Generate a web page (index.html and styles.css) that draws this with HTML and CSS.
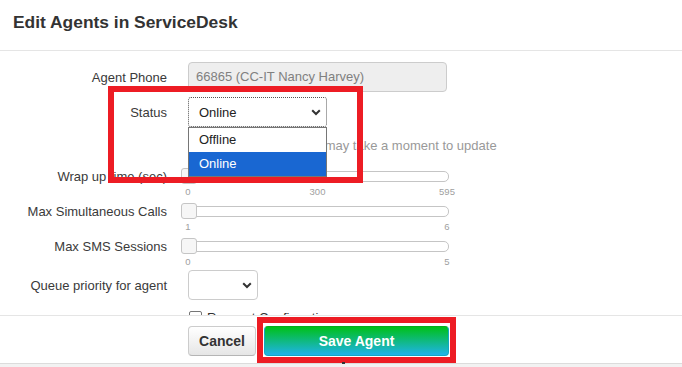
FILE: index.html
```html
<!DOCTYPE html>
<html lang="en">
<head>
    <meta charset="UTF-8">
    <title>Edit Agents in ServiceDesk</title>
    <link rel="stylesheet" href="styles.css">
</head>
<body>

    <div class="modal">
        <div class="modal-header">
            <h4>Edit Agents in ServiceDesk</h4>
        </div>

        <div class="modal-body">
            <div class="row">
                <label>Agent Phone</label>
                <div class="readonly">66865 (CC-IT Nancy Harvey)</div>
            </div>

            <div class="row row-status">
                <label>Status</label>
                <div class="select-wrap">
                    <div class="select select-status focus">
                        <span>Online</span>
                        <svg width="10" height="7" viewBox="0 0 10 7"><polyline points="1.2,1.2 5,5 8.8,1.2" fill="none" stroke="#333" stroke-width="2"/></svg>
                    </div>
                    <!-- open dropdown list -->
                    <ul class="options">
                        <li>Offline</li>
                        <li class="selected">Online</li>
                    </ul>
                </div>
            </div>
            <div class="help">Agent status changes may take a moment to update</div>

            <div class="row slider-row">
                <label>Wrap up time (sec)</label>
                <div class="slider"><span class="handle"></span></div>
            </div>
            <div class="scale"><span>0</span><span>300</span><span>595</span></div>

            <div class="row slider-row">
                <label>Max Simultaneous Calls</label>
                <div class="slider"><span class="handle"></span></div>
            </div>
            <div class="scale"><span>1</span><span>6</span></div>

            <div class="row slider-row">
                <label>Max SMS Sessions</label>
                <div class="slider"><span class="handle"></span></div>
            </div>
            <div class="scale"><span>0</span><span>5</span></div>

            <div class="row">
                <label>Queue priority for agent</label>
                <div class="select select-queue">
                    <span></span>
                    <svg width="10" height="7" viewBox="0 0 10 7"><polyline points="1.2,1.2 5,5 8.8,1.2" fill="none" stroke="#333" stroke-width="2"/></svg>
                </div>
            </div>

            <div class="row row-check">
                <span></span>
                <div class="check"><span class="box"></span>Request Confirmation</div>
            </div>
        </div>

        <div class="modal-footer">
            <button class="btn btn-cancel">Cancel</button>
            <button class="btn btn-save">Save Agent</button>
        </div>

        <!-- annotation boxes -->
        <div class="mark mark-status"></div>
        <div class="mark mark-save"></div>
        <span class="cursor"></span>
    </div>

</body>
</html>
```

FILE: styles.css
```css
body {
    font-family: "Liberation Sans", Arial, sans-serif;
    font-size: 13px;
    color: #333;
    background-color: #f2f2f2;
    margin: 0;
}
.modal {
    position: relative;
    background-color: white;
    width: 682px;
}
.modal-header {
    height: 51px;
    padding: 12px 13px 0;
    box-sizing: border-box;
    border-bottom: 1px solid #e5e5e5;
}
.modal-header h4 {
    margin: 0;
    font-size: 17.4px;
    line-height: 20px;
    font-weight: bold;
    color: #333;
}
.modal-body {
    height: 264px;
    padding-top: 11px;
    box-sizing: border-box;
    overflow: hidden;
}
.row {
    display: grid;
    grid-template-columns: 167px 1fr;
    column-gap: 21px;
    align-items: center;
}
.row label {
    text-align: right;
    color: #3a3a3a;
}
.readonly {
    width: 259px;
    height: 30px;
    box-sizing: border-box;
    padding: 0 7px;
    line-height: 28px;
    background-color: #eee;
    border: 1px solid #ccc;
    border-radius: 4px;
    color: #808080;
}
.row-status {
    margin-top: 5px;
}
.select-wrap {
    position: relative;
    width: 139px;
}
.select {
    height: 30px;
    box-sizing: border-box;
    display: flex;
    align-items: center;
    justify-content: space-between;
    padding: 0 5px 0 10px;
    border: 1px solid #ccc;
    border-radius: 4px;
    background-color: white;
    color: #222;
}
.select.focus {
    border: 1px dotted #555;
    border-radius: 3px;
}
.select-status {
    width: 139px;
}
.select-queue {
    width: 70px;
}
.options {
    position: absolute;
    top: 30px;
    left: 0;
    width: 139px;
    box-sizing: border-box;
    margin: 0;
    padding: 0;
    list-style: none;
    border: 1px solid #767676;
    background-color: white;
    z-index: 2;
}
.options li {
    height: 24px;
    line-height: 24px;
    padding-left: 10px;
    color: #222;
}
.options li.selected {
    background-color: #1967d2;
    color: white;
}
.help {
    height: 38px;
    box-sizing: border-box;
    padding: 9px 0 0 196px;
    line-height: 20px;
    color: #999;
}
.slider-row {
    height: 22px;
}
.slider {
    position: relative;
    width: 268px;
    height: 11px;
    box-sizing: border-box;
    margin-left: -7px;
    border: 1px solid #c5c5c5;
    border-radius: 5px;
    background-color: white;
}
.handle {
    position: absolute;
    left: -1px;
    top: -4px;
    width: 16px;
    height: 16px;
    box-sizing: border-box;
    border: 1px solid #c5c5c5;
    border-radius: 3px;
    background-color: #f6f6f6;
}
.scale {
    display: flex;
    justify-content: space-between;
    width: 259px;
    height: 10px;
    margin: 0 0 3px 188px;
    font-size: 9.5px;
    line-height: 10px;
    color: #a0a0a0;
}
.scale span {
    width: 0;
    display: flex;
    justify-content: center;
    white-space: nowrap;
}
.row-check {
    height: 20px;
    margin-top: 7px;
}
.check {
    display: flex;
    align-items: center;
    gap: 5px;
    color: #333;
}
.check .box {
    width: 13px;
    height: 13px;
    box-sizing: border-box;
    border: 1px solid #767676;
    border-radius: 2px;
    margin-left: 1px;
}
.modal-footer {
    display: flex;
    gap: 8px;
    padding: 10px 0 7px 188px;
    border-top: 1px solid #e5e5e5;
    border-bottom: 1px solid #dcdcdc;
}
.btn {
    height: 30px;
    font-family: "Liberation Sans", Arial, sans-serif;
    font-size: 14px;
    font-weight: bold;
    border-radius: 4px;
    cursor: pointer;
}
.btn-cancel {
    width: 68px;
    color: #333;
    background: linear-gradient(#ffffff, #e6e6e6);
    border: 1px solid #ccc;
    border-bottom-color: #b5b5b5;
}
.btn-save {
    width: 185px;
    color: white;
    background: linear-gradient(#00c018, #1fb3ea);
    border: 1px solid #12a7c4;
    border-top-color: #07ad1c;
}
.mark {
    position: absolute;
    box-sizing: border-box;
    border: 6px solid #ed1c24;
    z-index: 3;
}
.mark-status {
    left: 108px;
    top: 86px;
    width: 255px;
    height: 97px;
}
.mark-save {
    left: 257px;
    top: 317px;
    width: 199px;
    height: 46px;
}
.cursor {
    position: absolute;
    left: 342px;
    top: 362px;
    width: 3px;
    height: 5px;
    background-color: #333;
    z-index: 4;
}
```
